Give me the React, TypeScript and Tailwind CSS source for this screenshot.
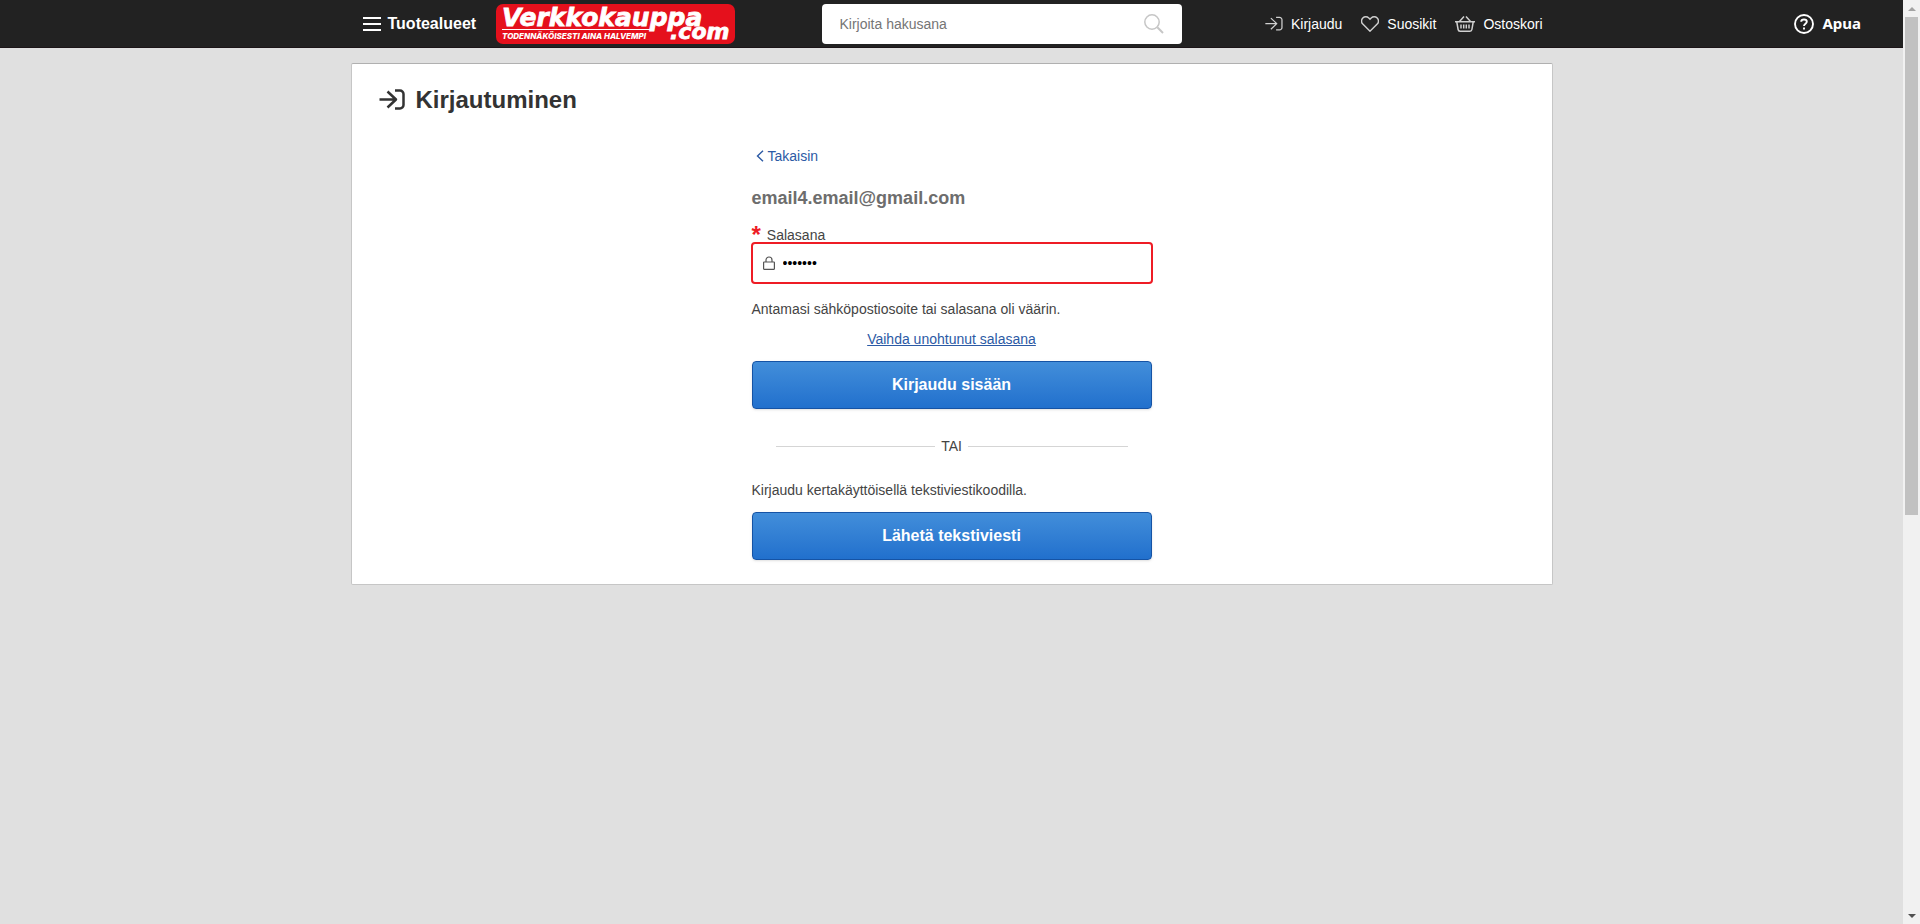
import type { ReactNode } from "react";

function LoginIcon({ className, strokeWidth }: { className: string; strokeWidth: number }) {
  return (
    <svg viewBox="0 0 26 22" className={className} fill="none" stroke="currentColor" strokeWidth={strokeWidth} aria-hidden="true">
      <path d="M0.5 10.5H17M8.5 2.5l8.5 8-8.5 8" strokeLinejoin="round" />
      <path d="M16 1.5h5a3.5 3.5 0 0 1 3.5 3.5v11a3.5 3.5 0 0 1-3.5 3.5h-5" />
    </svg>
  );
}

function HeartIcon() {
  return (
    <svg viewBox="0 0 18 16" className="h-4 w-[18px]" fill="none" stroke="currentColor" strokeWidth="1.4" aria-hidden="true">
      <path d="M9 15.2 1.8 8.1a4.3 4.3 0 0 1 0-6.1 4.2 4.2 0 0 1 6 0L9 3.2 10.2 2a4.2 4.2 0 0 1 6 0 4.3 4.3 0 0 1 0 6.1z" />
    </svg>
  );
}

function BasketIcon() {
  return (
    <svg viewBox="0 0 20 16" className="h-4 w-5" fill="none" stroke="currentColor" strokeWidth="1.5" aria-hidden="true">
      <path d="M0 5.7h20M1.8 6l1.3 7.5a2 2 0 0 0 2 1.7h9.8a2 2 0 0 0 2-1.7L18.2 6M4.5 5.5 9 .5M15.5 5.5 11 .5" />
      <path d="M6 8.5v4M8.7 8.5v4M11.3 8.5v4M14 8.5v4" />
    </svg>
  );
}

function Logo() {
  return (
    <svg viewBox="0 0 239 40" className="h-10 w-[239px]" role="img" aria-label="Verkkokauppa.com">
      <rect width="239" height="40" rx="7" fill="#e5101c" />
      <g fill="#fff" fontStyle="italic" fontWeight="900">
        <g stroke="#fff" strokeWidth="0.8" fontFamily="'DejaVu Sans', sans-serif">
          <text x="6" y="22" fontSize="25">Verkkokauppa</text>
          <text x="174" y="35" fontSize="22">.com</text>
        </g>
        <text x="6" y="35" fontFamily="Inter, sans-serif" fontSize="8" fontWeight="800">TODENNÄKÖISESTI AINA HALVEMPI</text>
      </g>
      <path d="M6 25.5h149" stroke="#fff" strokeWidth="1" />
    </svg>
  );
}

function NavLink({ icon, children }: { icon: ReactNode; children: ReactNode }) {
  return (
    <a href="#" className="flex items-center gap-2 text-sm text-white">
      <span className="text-[#d0d0d0]">{icon}</span>
      {children}
    </a>
  );
}

function PrimaryButton({ children }: { children: ReactNode }) {
  return (
    <button
      type="submit"
      className="h-12 w-full rounded border border-[#1553a5] bg-linear-to-b from-[#428eda] to-[#2170cd] text-base font-bold text-white shadow-sm"
    >
      {children}
    </button>
  );
}

function Header() {
  return (
    <header className="grid h-12 grid-cols-[1fr_minmax(0,1202px)_1fr] items-center border-b border-[#1c1518] bg-[#222]">
      <div />
      <div className="flex items-center">
        <div className="flex w-[471px] items-center gap-5 pl-3">
          <button type="button" className="flex items-center gap-[7px] text-base font-bold text-white">
            <svg viewBox="0 0 18 14" className="h-3.5 w-[18px]" aria-hidden="true">
              <path d="M0 1h18M0 7h18M0 13h18" stroke="#fff" strokeWidth="2" />
            </svg>
            Tuotealueet
          </button>
          <a href="#">
            <Logo />
          </a>
        </div>
        <form className="flex h-10 w-90 items-center rounded bg-white pr-[18px] pl-[18px]">
          <input
            type="search"
            aria-label="Haku"
            placeholder="Kirjoita hakusana"
            className="min-w-0 flex-1 text-sm outline-none placeholder:text-[#757575]"
          />
          <button type="button" aria-label="Hae">
            <svg viewBox="0 0 20 20" className="size-5" fill="none" stroke="#c6c6c6" aria-hidden="true">
              <circle cx="8" cy="8" r="7.2" strokeWidth="1.5" />
              <path d="m13.3 13.3 5.7 5.7" strokeWidth="2" />
            </svg>
          </button>
        </form>
        <nav className="flex flex-1 items-center justify-end gap-[19px] pr-2.5">
          <NavLink icon={<LoginIcon className="h-4 w-[18px]" strokeWidth={1.8} />}>Kirjaudu</NavLink>
          <NavLink icon={<HeartIcon />}>Suosikit</NavLink>
          <NavLink icon={<BasketIcon />}>Ostoskori</NavLink>
        </nav>
      </div>
      <div className="flex justify-end pr-[42px]">
        <button type="button" className="flex items-center gap-2 font-['Noto_Sans',sans-serif] text-[15px] font-bold text-white">
          <svg viewBox="0 0 20 20" className="size-5" fill="none" stroke="#fff" strokeWidth="1.9" aria-hidden="true">
            <circle cx="10" cy="10" r="9" />
            <path d="M7.2 7.8C7.2 4.8 12.8 4.8 12.8 7.8 12.8 9.7 10 9.7 10 12M10 13.5v2" />
          </svg>
          Apua
        </button>
      </div>
    </header>
  );
}

function LoginCard() {
  return (
    <section className="mx-auto mt-[15px] w-full max-w-[1202px] rounded-xs border border-[#c6c6c6] border-t-[#b0b0b0] bg-white pb-6">
      <h1 className="flex items-center gap-[11px] pt-5 pl-[27px] text-2xl leading-8 font-bold text-[#333]">
        <LoginIcon className="h-[22px] w-[26px]" strokeWidth={2.5} />
        Kirjautuminen
      </h1>
      <form className="mx-auto mt-[30px] flex w-100 flex-col text-sm text-[#444]">
        <a href="#" className="flex items-center gap-1 self-start pl-1 text-[#2c5aa5]">
          <svg viewBox="0 0 8 12" className="h-3 w-2" fill="none" stroke="currentColor" strokeWidth="1.4" aria-hidden="true">
            <path d="M7 .7 1.5 6 7 11.3" />
          </svg>
          Takaisin
        </a>
        <h2 className="mt-5 text-lg leading-6 font-bold text-[#6d6d6d]">email4.email@gmail.com</h2>
        <label htmlFor="password" className="mt-[18px] flex h-3.5 items-center gap-1.5">
          <span className="text-2xl leading-6 font-bold text-[#ee1c25]">*</span>
          Salasana
        </label>
        <div className="-mx-px flex h-[42px] items-center gap-2 rounded border-2 border-[#ee1c25] px-2.5">
          <svg viewBox="0 0 12 14" className="h-3.5 w-3" fill="none" stroke="#555" strokeWidth="1.2" aria-hidden="true">
            <rect x=".6" y="6" width="10.8" height="7.3" rx=".5" />
            <path d="M3 6V4a3 3 0 0 1 6 0v2" />
          </svg>
          <input id="password" type="password" defaultValue="salasan" className="min-w-0 flex-1 text-sm text-black outline-none" />
        </div>
        <p className="mt-[15px]">Antamasi sähköpostiosoite tai salasana oli väärin.</p>
        <a href="#" className="mt-2.5 mb-3 self-center text-[#2c5aa5] underline">
          Vaihda unohtunut salasana
        </a>
        <PrimaryButton>Kirjaudu sisään</PrimaryButton>
        <div className="mx-6 mt-[25px] mb-[22px] flex items-center gap-1.5 leading-6">
          <span className="h-px flex-1 bg-[#d5d5d5]" />
          TAI
          <span className="h-px flex-1 bg-[#d5d5d5]" />
        </div>
        <p className="mb-3">Kirjaudu kertakäyttöisellä tekstiviestikoodilla.</p>
        <PrimaryButton>Lähetä tekstiviesti</PrimaryButton>
      </form>
    </section>
  );
}

function ScrollRail() {
  return (
    <div className="flex w-[17px] shrink-0 flex-col items-center bg-[#f1f1f1]" aria-hidden="true">
      <div className="flex h-[17px] items-center">
        <svg viewBox="0 0 8 4" className="h-1 w-2">
          <path d="M0 4 4 0l4 4z" fill="#a3a3a3" />
        </svg>
      </div>
      <div className="flex w-full flex-1 flex-col items-center">
        <div className="h-[56%] w-[13px] bg-[#c1c1c1]" />
      </div>
      <div className="flex h-[17px] items-center">
        <svg viewBox="0 0 8 4" className="h-1 w-2">
          <path d="M0 0l4 4 4-4z" fill="#505050" />
        </svg>
      </div>
    </div>
  );
}

export default function App() {
  return (
    <div className="flex h-screen bg-[#e0e0e0] font-['Liberation_Sans',Arial,sans-serif]">
      <div className="min-w-0 flex-1 overflow-hidden">
        <Header />
        <main>
          <LoginCard />
        </main>
      </div>
      <ScrollRail />
    </div>
  );
}
